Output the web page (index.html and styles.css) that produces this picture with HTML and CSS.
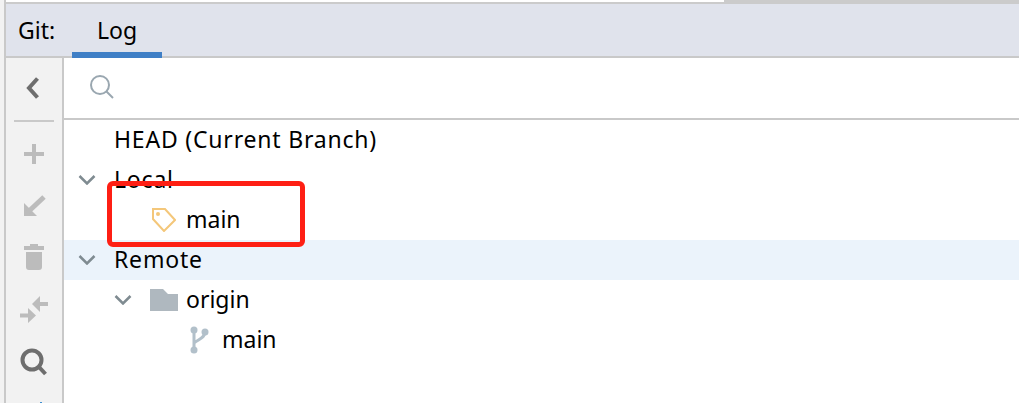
FILE: index.html
```html
<!DOCTYPE html>
<html lang="en">
<head>
  <meta charset="UTF-8" />
  <title>Git Log</title>
  <link rel="stylesheet" href="styles.css">
</head>
<body>
  <div class="rail"></div>

  <div class="main">
    <div class="topbar">
      <div class="topbar-light"></div>
    </div>

    <div class="header">
      <span class="header-label">Git:</span>
      <span class="tab">Log</span>
    </div>

    <div class="panel">
      <div class="toolbar">
        <button class="tool">
          <svg viewBox="0 0 32 32" width="32" height="32"><path class="line-dark" d="M19.500 6.500 11 16l8.500 9.500" /></svg>
        </button>
        <div class="tool-sep"></div>
        <button class="tool">
          <svg viewBox="0 0 32 32" width="32" height="32"><path class="fill-gray" d="M14 6h4v8h8v4h-8v8h-4v-8H6v-4h8z" /></svg>
        </button>
        <button class="tool">
          <svg viewBox="0 0 32 32" width="32" height="32"><path class="fill-gray" d="M6 13l13 13H6z" /><path class="line-gray" d="M10 22 26 7" /></svg>
        </button>
        <button class="tool">
          <svg viewBox="0 0 32 32" width="32" height="32"><path class="fill-gray" d="M12 2h8v2h6v4H6V4h6zM8 10h16v15a3 3 0 0 1-3 3H11a3 3 0 0 1-3-3z" /></svg>
        </button>
        <button class="tool">
          <svg viewBox="0 0 32 32" width="32" height="32"><path class="fill-gray" d="M14 10l8-8v6h8v4h-8v6zM18 21.500l-8-7.500v5.500H2v4h8V29z" /></svg>
        </button>
        <button class="tool">
          <svg viewBox="0 0 32 32" width="32" height="32"><circle class="line-dark" cx="14" cy="14" r="9.500" /><path class="line-dark" d="M21 21l6.500 7" /></svg>
        </button>
        <button class="tool">
          <svg viewBox="0 0 32 32" width="32" height="32"><rect class="fill-blue" x="22" y="4" width="2" height="1" /></svg>
        </button>
      </div>

      <div class="content">
        <div class="search">
          <svg viewBox="0 0 26 26" width="26" height="26"><circle class="line-search" cx="11" cy="11" r="9" /><path class="line-search" d="M17.500 17.500 24 24" /></svg>
        </div>

        <div class="tree">
          <div class="row row-head"><span class="label label-wide">HEAD (Current Branch)</span></div>
          <div class="row row-group">
            <svg class="chevron" viewBox="0 0 18 10" width="18" height="10"><path d="M1.500 1 9 8.500 16.500 1" /></svg>
            <span class="label label-wide">Local</span>
          </div>
          <div class="row row-tag">
            <svg class="tag-icon" viewBox="0 0 24 24" width="24" height="24"><path d="M1 1h12l10 11-11 11L1 11z" /><circle cx="6" cy="6" r="2" /></svg>
            <span class="label">main</span>
          </div>
          <div class="row row-group row-selected">
            <svg class="chevron" viewBox="0 0 18 10" width="18" height="10"><path d="M1.500 1 9 8.500 16.500 1" /></svg>
            <span class="label label-wide">Remote</span>
          </div>
          <div class="row row-folder">
            <svg class="chevron" viewBox="0 0 18 10" width="18" height="10"><path d="M1.500 1 9 8.500 16.500 1" /></svg>
            <svg class="folder-icon" viewBox="0 0 28 22" width="28" height="22"><path d="M0 0h13l5 5h10v17H0z" /></svg>
            <span class="label">origin</span>
          </div>
          <div class="row row-branch">
            <svg class="branch-icon" viewBox="0 0 20 28" width="20" height="28">
              <circle cx="5" cy="4" r="3.500" /><circle cx="16" cy="6" r="3.500" /><circle cx="5" cy="24" r="3.500" />
              <path d="M5 4v20M16 6c0 6-6 7-11 11" />
            </svg>
            <span class="label">main</span>
          </div>
        </div>
      </div>
    </div>
  </div>

  <!-- red annotation box over the tree -->
  <div class="highlight"></div>
</body>
</html>
```

FILE: styles.css
```css
* {
  box-sizing: border-box;
}

body {
  margin: 0;
  width: 1019px;
  height: 403px;
  overflow: hidden;
  position: relative;
  display: flex;
  background: #fff;
  color: #000;
  font-family: 'Noto Sans', 'Open Sans', sans-serif;
  font-size: 23px;
}

.rail {
  flex: 0 0 6px;
  background: #f2f2f2;
  border-right: 2px solid #c9c9c9;
}

.main {
  flex: 1;
  display: flex;
  flex-direction: column;
  min-width: 0;
}

.topbar {
  height: 4px;
  background: #cbcbcb;
}

.topbar-light {
  width: 718px;
  height: 2px;
  background: #fff;
}

.header {
  height: 54px;
  display: flex;
  align-items: flex-start;
  padding-left: 12px;
  background: #e0e3ec;
  border-bottom: 2px solid #c9c9c9;
}

.header-label {
  width: 54px;
  line-height: 52px;
}

.tab {
  width: 90px;
  height: 54px;
  line-height: 52px;
  text-align: center;
  border-bottom: 6px solid #3f7fc6;
}

.panel {
  flex: 1;
  display: flex;
  min-height: 0;
}

.toolbar {
  flex: 0 0 58px;
  display: flex;
  flex-direction: column;
  align-items: center;
  padding-top: 4px;
  background: #f2f2f2;
  border-right: 2px solid #c9c9c9;
  overflow: hidden;
}

.tool {
  flex: 0 0 52px;
  width: 52px;
  padding: 0;
  display: flex;
  align-items: center;
  justify-content: center;
  background: none;
  border: none;
}

.tool-sep {
  flex: 0 0 2px;
  width: 40px;
  margin: 6px 0;
  background: #c9c9c9;
}

.line-dark {
  fill: none;
  stroke: #6e6e6e;
  stroke-width: 4;
}

.line-gray {
  fill: none;
  stroke: #bcbcbc;
  stroke-width: 5;
}

.fill-gray {
  fill: #bcbcbc;
}

.fill-blue {
  fill: #3f8fd0;
}

.content {
  flex: 1;
  min-width: 0;
}

.search {
  height: 62px;
  padding: 16px 0 0 25px;
  border-bottom: 2px solid #c9c9c9;
}

.search svg {
  display: block;
}

.line-search {
  fill: none;
  stroke: #9aa7b0;
  stroke-width: 2;
}

.row {
  height: 40px;
  display: flex;
  align-items: center;
  white-space: nowrap;
}

.label {
  margin-bottom: 2px;
}

.label-wide {
  margin-left: -1px;
  letter-spacing: 0.8px;
}

.row-head {
  padding-left: 51px;
}

.row-group {
  padding-left: 14px;
}

.row-selected {
  background: #ebf3fb;
}

.row-folder {
  padding-left: 50px;
}

.row-tag {
  padding-left: 88px;
}

.row-branch {
  padding-left: 125px;
}

.chevron {
  flex: none;
  margin-right: 19px;
  fill: none;
  stroke: #7f8b91;
  stroke-width: 2.500;
}

.row-folder .chevron {
  margin-right: 18px;
}

.folder-icon {
  flex: none;
  margin-right: 8px;
  fill: #afb8bf;
}

.tag-icon {
  flex: none;
  margin-right: 10px;
  fill: none;
  stroke: #f4c77a;
  stroke-width: 2;
}

.tag-icon circle {
  fill: #f4c77a;
  stroke: none;
}

.branch-icon {
  flex: none;
  margin-right: 13px;
  fill: #b2c0ca;
}

.branch-icon path {
  fill: none;
  stroke: #b2c0ca;
  stroke-width: 3;
}

.highlight {
  position: absolute;
  left: 107px;
  top: 181px;
  width: 198px;
  height: 66px;
  border: 5px solid #fe1f14;
  border-radius: 6px;
}
```
